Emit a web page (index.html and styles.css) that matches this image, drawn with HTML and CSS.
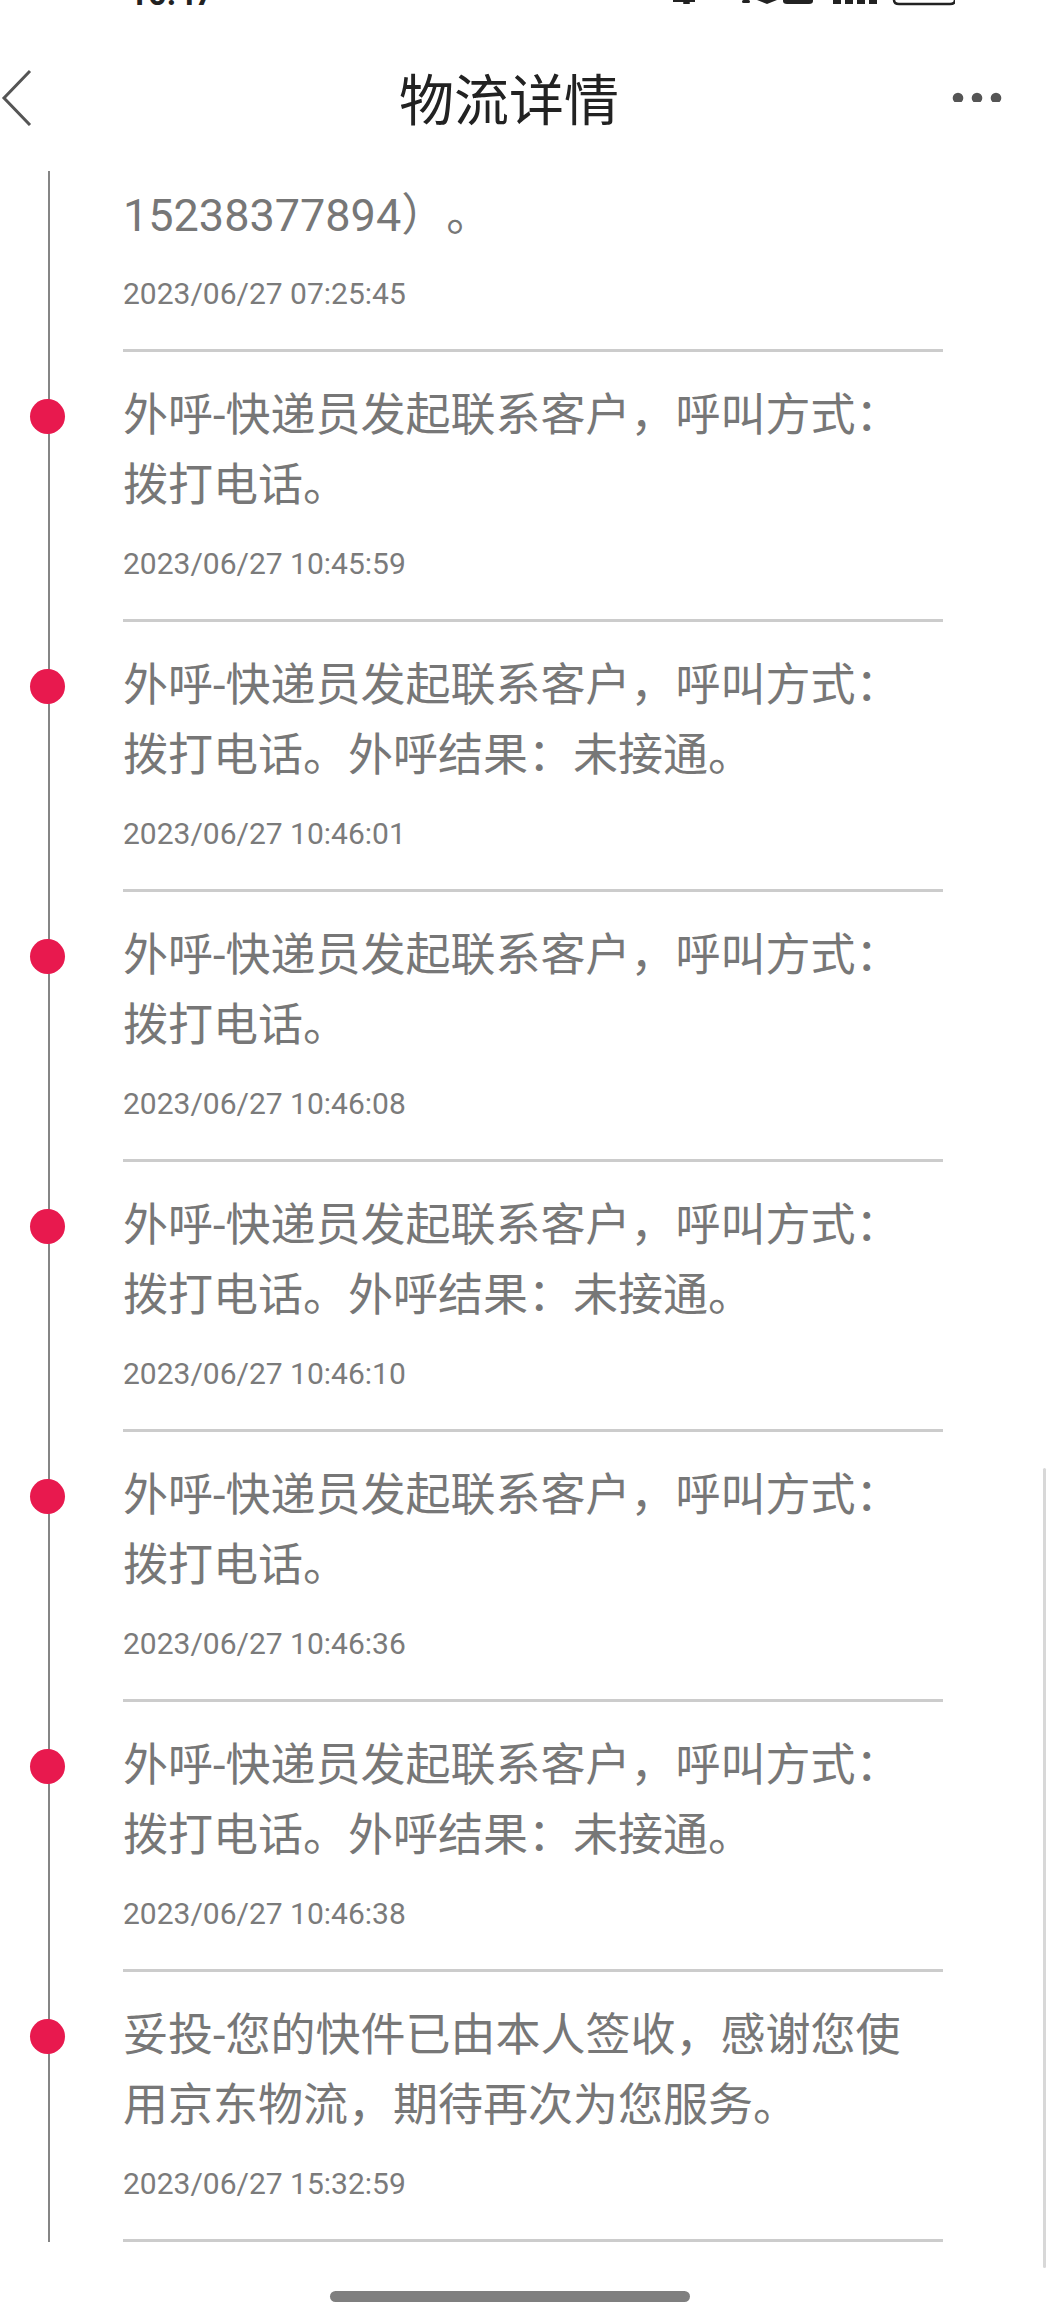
FILE: index.html
```html
<!DOCTYPE html>
<html>
<head>
  <meta charset="utf-8">
  <title>物流详情</title>
  <link rel="stylesheet" href="styles.css">
</head>
<body>
  <div class="statusbar">
    <span class="clock">10:47</span>
    <svg class="sys-icons" width="282" height="6" viewBox="0 0 282 6">
      <rect x="0" y="0" width="22" height="2" fill="#222"/>
      <rect x="10" y="2" width="7" height="2" rx="1" fill="#222"/>
      <rect x="69" y="0" width="8" height="3" rx="1.5" fill="#222"/>
      <path d="M84 0 L104 0 L94 4 Z" fill="#222"/>
      <path d="M110 0 L140 0 L140 1 Q140 4 136 4 L114 4 Q110 4 110 1 Z" fill="#222"/>
      <rect x="160" y="0" width="8" height="4" fill="#222"/>
      <rect x="172" y="0" width="8" height="4" fill="#222"/>
      <rect x="184" y="0" width="8" height="4" fill="#222"/>
      <rect x="196" y="0" width="8" height="4" fill="#222"/>
      <path d="M221 0 Q221 4 226 4 L277 4 Q282 4 282 0" fill="none" stroke="#222" stroke-width="2.5"/>
    </svg>
  </div>

  <div class="nav">
    <div class="back">
      <svg width="40" height="60" viewBox="0 0 40 60">
        <polyline points="30,5 4,32 30,59" fill="none" stroke="#555" stroke-width="3"/>
      </svg>
    </div>
    <div class="title">物流详情</div>
    <div class="more">
      <svg width="50" height="12" viewBox="0 0 50 12">
        <circle cx="6" cy="8" r="5.3" fill="#555"/>
        <circle cx="25" cy="8" r="5.3" fill="#555"/>
        <circle cx="44" cy="8" r="5.3" fill="#555"/>
      </svg>
    </div>
  </div>

  <div class="timeline">
    <div class="item first">
      <div class="desc">15238377894）。</div>
      <div class="time">2023/06/27 07:25:45</div>
    </div>

    <div class="item">
      <span class="dot"></span>
      <div class="desc">外呼-快递员发起联系客户，呼叫方式：拨打电话。</div>
      <div class="time">2023/06/27 10:45:59</div>
    </div>

    <div class="item">
      <span class="dot"></span>
      <div class="desc">外呼-快递员发起联系客户，呼叫方式：拨打电话。外呼结果：未接通。</div>
      <div class="time">2023/06/27 10:46:01</div>
    </div>

    <div class="item">
      <span class="dot"></span>
      <div class="desc">外呼-快递员发起联系客户，呼叫方式：拨打电话。</div>
      <div class="time">2023/06/27 10:46:08</div>
    </div>

    <div class="item">
      <span class="dot"></span>
      <div class="desc">外呼-快递员发起联系客户，呼叫方式：拨打电话。外呼结果：未接通。</div>
      <div class="time">2023/06/27 10:46:10</div>
    </div>

    <div class="item">
      <span class="dot"></span>
      <div class="desc">外呼-快递员发起联系客户，呼叫方式：拨打电话。</div>
      <div class="time">2023/06/27 10:46:36</div>
    </div>

    <div class="item">
      <span class="dot"></span>
      <div class="desc">外呼-快递员发起联系客户，呼叫方式：拨打电话。外呼结果：未接通。</div>
      <div class="time">2023/06/27 10:46:38</div>
    </div>

    <div class="item">
      <span class="dot"></span>
      <div class="desc">妥投-您的快件已由本人签收，感谢您使用京东物流，期待再次为您服务。</div>
      <div class="time">2023/06/27 15:32:59</div>
    </div>
  </div>

  <div class="scrollbar"></div>
  <div class="home-bar"></div>
</body>
</html>
```

FILE: styles.css
```css
body {
  margin: 0;
  padding: 0;
  width: 1050px;
  height: 2302px;
  overflow: hidden;
  position: relative;
  background-color: white;
  font-family: Roboto, "Noto Sans CJK SC", sans-serif;
  text-spacing-trim: space-all;
}

.statusbar {
  height: 6px;
  overflow: hidden;
  display: flex;
  align-items: flex-start;
  justify-content: space-between;
  padding: 0 95px 0 129px;
}

.clock {
  font-size: 33px;
  font-weight: bold;
  line-height: 33px;
  margin-top: -23px;
  color: #222;
}

.nav {
  height: 120px;
  padding-top: 30px;
  display: flex;
  align-items: center;
}

.back {
  width: 66px;
}

.back svg {
  display: block;
}

.title {
  flex: 1;
  text-align: center;
  font-size: 55px;
  color: #222;
  font-family: "Noto Sans CJK SC", sans-serif;
}

.more {
  width: 50px;
  margin-right: 48px;
}

.more svg {
  display: block;
}

.timeline {
  margin-top: 15px;
  margin-left: 48px;
  width: 895px;
  border-left: 2px solid #858585;
}

.item {
  position: relative;
  margin-left: 73px;
  width: 820px;
  padding: 29px 0 38px;
  border-bottom: 3px solid #cccccc;
}

.item.first {
  padding-top: 10px;
}

.desc {
  font-size: 45px;
  line-height: 70px;
  color: #777;
}

.time {
  margin-top: 26px;
  font-size: 30px;
  line-height: 34px;
  color: #7b7b7b;
}

.dot {
  position: absolute;
  left: -93px;
  top: 47px;
  width: 35px;
  height: 35px;
  border-radius: 50%;
  background: #e8194e;
}

.scrollbar {
  position: absolute;
  right: 4px;
  top: 1468px;
  width: 3px;
  height: 800px;
  border-radius: 2px;
  background: #d8d8d8;
}

.home-bar {
  width: 360px;
  height: 11px;
  margin: 49px 0 0 330px;
  border-radius: 6px;
  background: #7f7f7f;
}
```
